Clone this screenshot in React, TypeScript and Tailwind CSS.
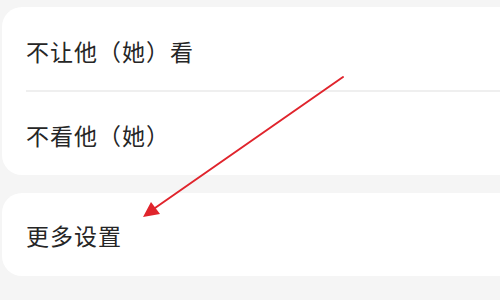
import React from 'react';

const font = { fontFamily: '"Noto Sans CJK SC", "Noto Sans", sans-serif' };

const App: React.FC = () => {
  return (
    <div className="relative w-[500px] h-[300px] overflow-hidden bg-[#f5f5f5]" style={font}>
      <div className="pt-[7px] pl-[2px] flex flex-col gap-[18px]">
        <div className="w-[530px] rounded-[20px] bg-white">
          <div className="h-[83px] flex items-center pl-[24px] pt-[5px] text-[23px] tracking-[1px] text-[#262626]">
            不让他（她）看
          </div>
          <div className="ml-[24px] h-[2px] bg-[#efefef]" />
          <div className="h-[83px] flex items-center pl-[24px] pt-[3px] text-[23px] tracking-[1px] text-[#262626]">
            不看他（她）
          </div>
        </div>
        <div className="w-[530px] rounded-[20px] bg-white">
          <div className="h-[83px] flex items-center pl-[24px] pt-[2px] text-[23px] tracking-[1px] text-[#262626]">
            更多设置
          </div>
        </div>
      </div>

      <svg className="absolute inset-0 pointer-events-none" width="500" height="300" viewBox="0 0 500 300">
        <line x1="343" y1="77" x2="155" y2="208" stroke="#e0242c" strokeWidth="2" strokeLinecap="round" />
        <polygon points="143,217 151,202 160,214" fill="#e0242c" />
      </svg>
    </div>
  );
};

export default App;
